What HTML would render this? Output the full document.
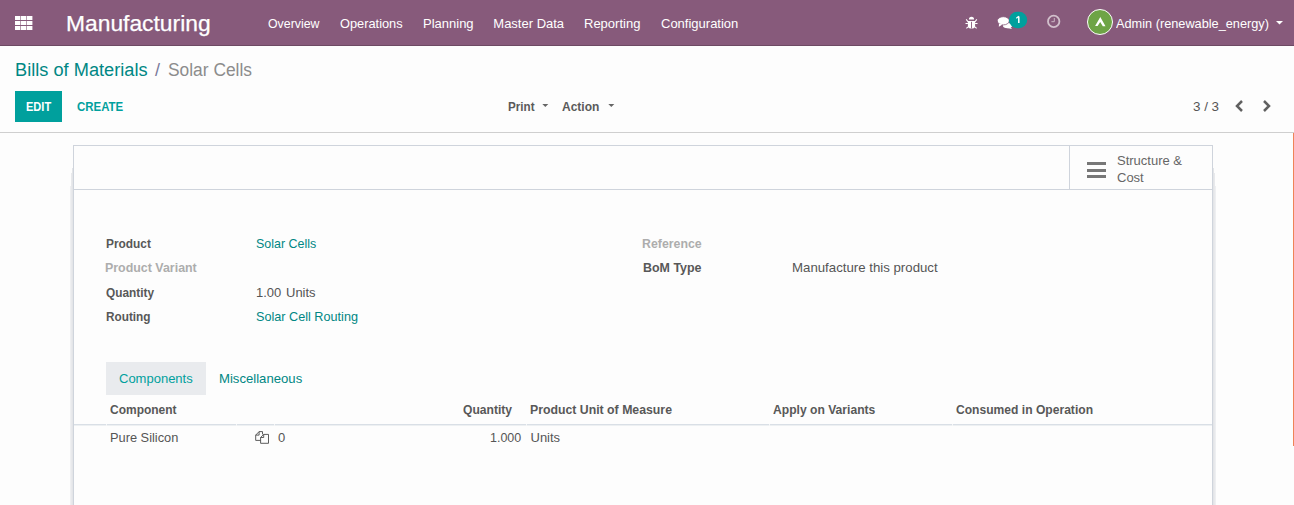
<!DOCTYPE html>
<html><head><meta charset="utf-8">
<style>
html,body{margin:0;padding:0;width:1294px;height:505px;overflow:hidden;background:#fdfdfd;}
body{position:relative;font-family:"Liberation Sans",sans-serif;font-size:13px;color:#555;}
.a{position:absolute;white-space:nowrap;line-height:13px;}
.sx{display:inline-block;transform-origin:0 0;}
#nav{position:absolute;left:0;top:0;width:1294px;height:45px;background:#875A7B;border-bottom:1px solid #6d4a63;}
.w{color:#fff;}
.b{font-weight:bold;color:#585858;}
.teal{color:#008784;}
.muted{color:#adadad;}
</style></head><body>
<div id="nav"></div>
<!-- apps grid -->
<svg class="a" style="left:15px;top:16px" width="18" height="14" viewBox="0 0 18 14"><g fill="#fff"><rect x="0" y="0" width="5.4" height="4"/><rect x="6" y="0" width="5.4" height="4"/><rect x="12" y="0" width="5.4" height="4"/><rect x="0" y="5" width="5.4" height="4"/><rect x="6" y="5" width="5.4" height="4"/><rect x="12" y="5" width="5.4" height="4"/><rect x="0" y="10" width="5.4" height="4"/><rect x="6" y="10" width="5.4" height="4"/><rect x="12" y="10" width="5.4" height="4"/></g></svg>
<div id="t_brand" class="a w" style="left:65.6px;top:12.9px;font-size:22.5px;line-height:22.5px;-webkit-text-stroke:0.25px #fff"><span class="sx" style="transform:scaleX(1.014)">Manufacturing</span></div>
<div id="t_m1" class="a w" style="left:268px;top:17.2px"><span class="sx" style="transform:scaleX(0.949)">Overview</span></div>
<div id="t_m2" class="a w" style="left:340px;top:17.2px"><span class="sx" style="transform:scaleX(0.985)">Operations</span></div>
<div id="t_m3" class="a w" style="left:423px;top:17.2px">Planning</div>
<div id="t_m4" class="a w" style="left:493.3px;top:17.2px">Master Data</div>
<div id="t_m5" class="a w" style="left:584px;top:17.2px">Reporting</div>
<div id="t_m6" class="a w" style="left:661px;top:17.2px">Configuration</div>

<!-- systray -->
<svg class="a" style="left:962px;top:13px" width="20" height="20" viewBox="0 0 20 20">
<path d="M6.9 6.6 A2.6 2.8 0 0 1 12.1 6.6 Z" fill="#fff"/>
<path d="M5.9 8.1 H13.1 V13 Q13.1 15.4 10.5 15.4 H8.5 Q5.9 15.4 5.9 13 Z" fill="#fff"/>
<rect x="9.1" y="8.8" width="0.9" height="6.6" fill="#875A7B"/>
<g stroke="#fff" stroke-width="1.1" fill="none"><path d="M6.2 9 L4.2 6.3 M12.8 9 L14.8 6.3 M5.9 10.5 H3.5 M13.1 10.5 H15.5 M6 13.8 L4.4 15.3 M13 13.8 L14.6 15.3"/></g>
</svg>
<svg class="a" style="left:994px;top:8px" width="36" height="24" viewBox="0 0 36 24">
<g fill="#fff">
<ellipse cx="13.5" cy="17.6" rx="4.6" ry="2.6"/><path d="M16 18.5 L18 20.9 L13 20 Z"/>
<ellipse cx="9.3" cy="12.8" rx="6" ry="4.1" stroke="#875A7B" stroke-width="0.8"/><path d="M5 15.5 L4.8 18.8 L8.5 16.5 Z"/>
</g>
<rect x="15" y="3.8" width="18.2" height="16.4" rx="8.2" fill="#00A09D"/>
</svg>
<svg class="a" style="left:1012px;top:14px" width="12" height="12" viewBox="0 0 12 12"><path d="M6.8 2.5 V9" stroke="#fff" stroke-width="1.5" fill="none"/><path d="M4.3 4.2 L6.8 2.3" stroke="#fff" stroke-width="1.2" fill="none"/></svg>
<svg class="a" style="left:1043px;top:11px" width="22" height="20" viewBox="0 0 22 20">
<circle cx="10.7" cy="10.4" r="5.7" fill="none" stroke="#d2c0cc" stroke-width="1.8"/>
<path d="M11.3 7 V10.7 H8.4" fill="none" stroke="#d2c0cc" stroke-width="0.9"/></svg>
<div class="a" style="left:1087px;top:9px;width:24px;height:24px;border-radius:50%;background:#6ea446;border:1px solid #fff"></div>
<svg class="a" style="left:1085px;top:7px" width="30" height="30" viewBox="0 0 30 30">
<path d="M10.1 19 L15.3 10.1 L20.5 19.3 L17.8 19.3 L15.2 14.9 L12.6 19 Z" fill="#fff"/></svg>
<div id="t_admin" class="a w" style="left:1116px;top:16.7px"><span class="sx" style="transform:scaleX(0.98)">Admin (renewable_energy)</span></div>
<svg class="a" style="left:1276px;top:21px" width="7" height="4" viewBox="0 0 7 4"><path d="M0 0 H7 L3.5 3.5 Z" fill="#fff"/></svg>

<!-- control panel -->
<div id="t_bc1" class="a teal" style="left:15px;top:61px;font-size:18px;line-height:18px"><span class="sx" style="transform:scaleX(1.012)">Bills of Materials</span></div>
<div id="t_bcs" class="a" style="left:155px;top:61px;font-size:18px;line-height:18px;color:#7a7a9a">/</div>
<div id="t_bc2" class="a" style="left:168px;top:61px;font-size:18px;line-height:18px;color:#8c8c8c"><span class="sx" style="transform:scaleX(0.965)">Solar Cells</span></div>
<div class="a" style="left:15px;top:91px;width:47px;height:31px;background:#00A09D"></div>
<div id="t_edit" class="a b" style="left:25.5px;top:100px;color:#fff"><span class="sx" style="transform:scaleX(0.85)">EDIT</span></div>
<div id="t_create" class="a b" style="left:77px;top:100px;color:#00A09D"><span class="sx" style="transform:scaleX(0.88)">CREATE</span></div>
<div id="t_print" class="a b" style="left:508px;top:100px;color:#5a5a5a"><span class="sx" style="transform:scaleX(0.895)">Print</span></div>
<svg class="a" style="left:542px;top:104px" width="7" height="4" viewBox="0 0 7 4"><path d="M0.3 0 H6.3 L3.3 3 Z" fill="#666"/></svg>
<div id="t_action" class="a b" style="left:562px;top:100px;color:#5a5a5a"><span class="sx" style="transform:scaleX(0.923)">Action</span></div>
<svg class="a" style="left:607.5px;top:104px" width="7" height="4" viewBox="0 0 7 4"><path d="M0.3 0 H6.3 L3.3 3 Z" fill="#666"/></svg>
<div id="t_pager" class="a" style="left:1193px;top:100px"><span class="sx" style="transform:scaleX(1.03)">3 / 3</span></div>
<svg class="a" style="left:1235px;top:100px" width="9" height="12" viewBox="0 0 9 12"><path d="M7 1 L2 6 L7 11" fill="none" stroke="#606060" stroke-width="2.5"/></svg>
<svg class="a" style="left:1262.3px;top:100px" width="9" height="12" viewBox="0 0 9 12"><path d="M2 1 L7 6 L2 11" fill="none" stroke="#606060" stroke-width="2.5"/></svg>
<div class="a" style="left:0;top:132px;width:1294px;height:1px;background:#cfcfcf"></div>
<div class="a" style="left:1293px;top:133px;width:1px;height:313px;background:#ef8357"></div>

<!-- sheet -->
<div class="a" style="left:73px;top:145px;width:1138px;height:400px;border:1px solid #cfd4dc;background:#fdfdfd"></div>
<div class="a" style="left:72px;top:168px;width:1px;height:340px;background:#e3e5e8"></div><div class="a" style="left:71px;top:173px;width:1px;height:340px;background:#e8e9ec"></div><div class="a" style="left:70px;top:186px;width:1px;height:340px;background:#eeeff1"></div><div class="a" style="left:1213px;top:168px;width:1px;height:340px;background:#e3e5e8"></div><div class="a" style="left:1214px;top:173px;width:1px;height:340px;background:#e8e9ec"></div><div class="a" style="left:1215px;top:186px;width:1px;height:340px;background:#eeeff1"></div>
<div class="a" style="left:74px;top:189px;width:1138px;height:1px;background:#cfd4dc"></div>
<div class="a" style="left:1069px;top:146px;width:1px;height:43px;background:#cfd4dc"></div>
<svg class="a" style="left:1087px;top:162px" width="19" height="16" viewBox="0 0 19 16"><g fill="#777"><rect x="0" y="0" width="19" height="3"/><rect x="0" y="7" width="19" height="3"/><rect x="0" y="13" width="19" height="3"/></g></svg>
<div id="t_struct" class="a" style="left:1117px;top:153.7px;color:#666">Structure &amp;</div>
<div id="t_cost" class="a" style="left:1117px;top:171.1px;color:#666">Cost</div>


<!-- form fields -->
<div id="l_product" class="a b" style="left:106px;top:237px"><span class="sx" style="transform:scaleX(0.914)">Product</span></div>
<div id="l_variant" class="a b muted" style="left:105px;top:261px"><span class="sx" style="transform:scaleX(0.955)">Product Variant</span></div>
<div id="l_qty" class="a b" style="left:106px;top:285.5px"><span class="sx" style="transform:scaleX(0.91)">Quantity</span></div>
<div id="l_routing" class="a b" style="left:106px;top:310px"><span class="sx" style="transform:scaleX(0.907)">Routing</span></div>
<div id="v_product" class="a teal" style="left:256px;top:237px"><span class="sx" style="transform:scaleX(0.957)">Solar Cells</span></div>
<div id="v_qty" class="a" style="left:256px;top:285.5px">1.00</div><div id="v_uom" class="a" style="left:286px;top:285.5px">Units</div>
<div id="v_routing" class="a teal" style="left:256px;top:310px"><span class="sx" style="transform:scaleX(0.973)">Solar Cell Routing</span></div>
<div id="l_ref" class="a b muted" style="left:642px;top:237px"><span class="sx" style="transform:scaleX(0.95)">Reference</span></div>
<div id="l_bomtype" class="a b" style="left:643px;top:261px"><span class="sx" style="transform:scaleX(0.957)">BoM Type</span></div>
<div id="v_bomtype" class="a" style="left:792.4px;top:261px"><span class="sx" style="transform:scaleX(1.018)">Manufacture this product</span></div>

<!-- tabs -->
<div class="a" style="left:106px;top:362px;width:100px;height:33px;background:#e9ebee"></div>
<div id="tab1" class="a" style="left:119px;top:371.7px;color:#00A09D">Components</div>
<div id="tab2" class="a teal" style="left:219px;top:371.7px"><span class="sx" style="transform:scaleX(1.01)">Miscellaneous</span></div>

<!-- table -->
<div id="h_comp" class="a b" style="left:110px;top:402.8px"><span class="sx" style="transform:scaleX(0.922)">Component</span></div>
<div id="h_qty" class="a b" style="left:463px;top:402.8px"><span class="sx" style="transform:scaleX(0.93)">Quantity</span></div>
<div id="h_uom" class="a b" style="left:529.7px;top:402.8px"><span class="sx" style="transform:scaleX(0.945)">Product Unit of Measure</span></div>
<div id="h_var" class="a b" style="left:773.2px;top:402.8px"><span class="sx" style="transform:scaleX(0.932)">Apply on Variants</span></div>
<div id="h_op" class="a b" style="left:955.8px;top:402.8px"><span class="sx" style="transform:scaleX(0.93)">Consumed in Operation</span></div>
<div class="a" style="left:74px;top:424px;width:1138px;height:1px;background:#d9dfe6"></div><div class="a" style="left:74px;top:425px;width:1138px;height:1px;background:#edf0f2"></div><div class="a" style="left:106px;top:424px;width:1px;height:2px;background:#f6f7f8"></div><div class="a" style="left:236px;top:424px;width:1px;height:2px;background:#f6f7f8"></div><div class="a" style="left:274px;top:424px;width:1px;height:2px;background:#f6f7f8"></div><div class="a" style="left:526px;top:424px;width:1px;height:2px;background:#f6f7f8"></div><div class="a" style="left:769px;top:424px;width:1px;height:2px;background:#f6f7f8"></div><div class="a" style="left:952px;top:424px;width:1px;height:2px;background:#f6f7f8"></div>
<div id="r_name" class="a" style="left:110px;top:430.7px"><span class="sx" style="transform:scaleX(0.985)">Pure Silicon</span></div>
<svg class="a" style="left:251px;top:428px" width="40" height="20" viewBox="0 0 40 20"><g fill="none" stroke="#4c4c4c" stroke-width="0.9">
<path d="M9.6 12.4 H4.7 V7.1 L8.1 3.6 H11.5 V6.4"/><path d="M4.7 7.1 H8.1 V3.6"/>
<path d="M12.7 6.4 H17.5 V15.3 H9.6 V9.5 Z"/><path d="M9.6 9.5 H12.7 V6.4"/></g></svg>
<div id="r_zero" class="a" style="left:278px;top:430.7px">0</div>
<div id="r_qty" class="a" style="left:490px;top:430.7px"><span class="sx" style="transform:scaleX(0.96)">1.000</span></div>
<div id="r_uom" class="a" style="left:530.5px;top:430.7px">Units</div>
</body></html>
